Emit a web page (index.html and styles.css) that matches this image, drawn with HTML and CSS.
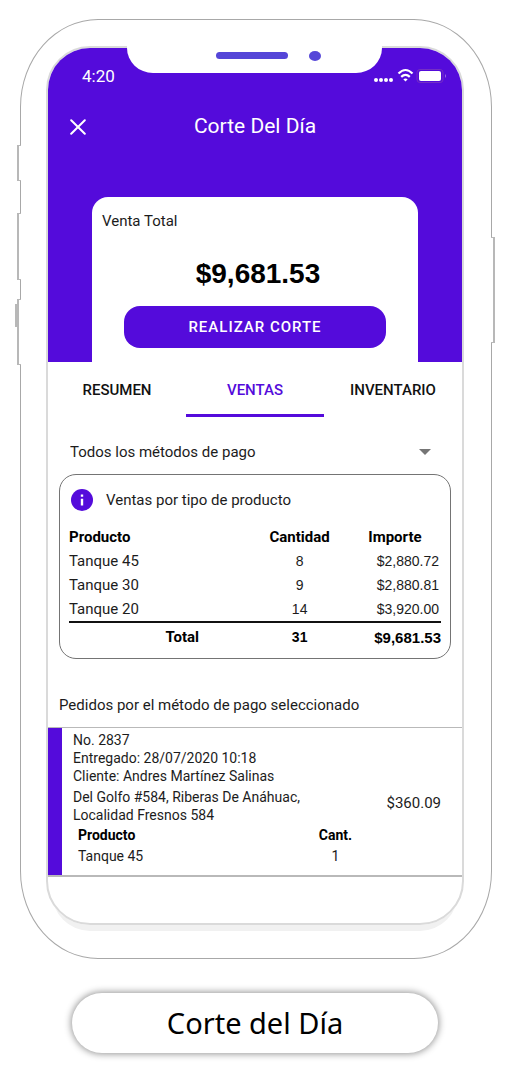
FILE: index.html
```html
<!DOCTYPE html>
<html lang="es">
<head>
<meta charset="utf-8">
<meta name="viewport" content="width=device-width, initial-scale=1">
<title>Corte del Día</title>
<link rel="stylesheet" href="styles.css">
</head>
<body>
<figure class="showcase">
  <div class="phone">
    <span class="side side-mute"></span>
    <span class="side side-up"></span>
    <span class="side side-down"></span>
    <span class="side side-nub"></span>
    <span class="side side-power"></span>
    <div class="notch"><span class="speaker"></span><span class="camera"></span></div>
    <main class="screen">
      <header class="hero">
        <div class="status">
          <span class="clock">4:20</span>
          <svg class="status-icons" viewBox="0 0 74 16" aria-hidden="true">
            <g fill="#fff">
              <circle cx="4" cy="12" r="2"/><circle cx="9" cy="12" r="2"/><circle cx="14" cy="12" r="2"/><circle cx="19" cy="12" r="2"/>
              <path d="M33.500 13.500l-2.200-2.300q2.200-1.600 4.400 0z"/>
              <rect x="47" y="3" width="22" height="10" rx="2"/>
            </g>
            <g fill="none" stroke="#fff" stroke-width="2.200">
              <path d="M26.500 5.600q7-7.200 14 0"/><path d="M29.200 8.900q4.300-4.100 8.600 0"/>
            </g>
            <rect x="45" y="1.500" width="26" height="13" rx="3" fill="none" stroke="#742fc4"/>
            <path d="M73 6v4q2-2 0-4z" fill="#a06be0"/>
          </svg>
        </div>
        <div class="titlebar">
          <button class="close" aria-label="Cerrar"><svg viewBox="0 0 16 16" aria-hidden="true"><path d="M1.200 1.200l13.600 13.600M14.800 1.200L1.200 14.800" stroke="#fff" stroke-width="2" stroke-linecap="round"/></svg></button>
          <h1>Corte Del Día</h1>
        </div>
        <section class="total-card">
          <h2>Venta Total</h2>
          <p class="amount">$9,681.53</p>
          <button class="cta">REALIZAR CORTE</button>
        </section>
      </header>
      <nav class="tabs">
        <button>RESUMEN</button>
        <button class="active">VENTAS</button>
        <button>INVENTARIO</button>
      </nav>
      <div class="filter">
        <select aria-label="Método de pago"><option>Todos los métodos de pago</option></select>
        <svg viewBox="0 0 12 6" aria-hidden="true"><path d="M0 0h12L6 6z" fill="#757575"/></svg>
      </div>
      <section class="summary">
        <h2><svg viewBox="0 0 24 24" aria-hidden="true"><circle cx="12" cy="12" r="12" fill="#540bdb"/><path d="M10.700 10.500h2.600V18h-2.600zM10.700 6h2.600v2.500h-2.600z" fill="#fff"/></svg>Ventas por tipo de producto</h2>
        <table class="sales">
          <thead><tr><th>Producto</th><th>Cantidad</th><th>Importe</th></tr></thead>
          <tbody>
            <tr><td>Tanque 45</td><td>8</td><td>$2,880.72</td></tr>
            <tr><td>Tanque 30</td><td>9</td><td>$2,880.81</td></tr>
            <tr><td>Tanque 20</td><td>14</td><td>$3,920.00</td></tr>
          </tbody>
          <tfoot><tr><th>Total</th><td>31</td><td>$9,681.53</td></tr></tfoot>
        </table>
      </section>
      <h2 class="orders-title">Pedidos por el método de pago seleccionado</h2>
      <article class="order">
        <div class="order-info">
          <p>No. 2837<br>Entregado: 28/07/2020 10:18<br>Cliente: Andres Martínez Salinas</p>
          <p>Del Golfo #584, Riberas De Anáhuac,<br>Localidad Fresnos 584</p>
          <table class="items">
            <thead><tr><th>Producto</th><th>Cant.</th></tr></thead>
            <tbody><tr><td>Tanque 45</td><td>1</td></tr></tbody>
          </table>
        </div>
        <p class="order-price">$360.09</p>
      </article>
    </main>
  </div>
  <figcaption class="caption">Corte del Día</figcaption>
</figure>
</body>
</html>
```
FILE: styles.css
```css
* { box-sizing: border-box; }
body, h1, h2, p, figure { margin: 0; }
body { background: #fff; color: #1c1c1c; font-family: Roboto, "Liberation Sans", sans-serif; font-size: 15px; }
h1, h2 { font-weight: 400; font-size: 15px; }
button { border: 0; padding: 0; background: none; font: inherit; color: inherit; cursor: pointer; }
svg { display: block; }

.showcase { padding: 19px 18px 12px 20px; }

.phone {
  position: relative;
  border: 1px solid #a8a8a8;
  border-radius: 78px / 88px;
  padding: 26px 27px 33px 25px;
}

/* Hardware details drawn over the frame outline */
.side { position: absolute; left: -4px; width: 4px; border: solid #b8b8b8; border-width: 1px 0 1px 2px; background: #fff; }
.side-mute { top: 125px; height: 36px; }
.side-up { top: 193px; height: 67px; }
.side-down { top: 279px; height: 66px; }
.side-nub { top: 284px; left: -6px; width: 2px; height: 23px; border-width: 0 0 0 2px; }
.side-power { top: 217px; left: auto; right: -4px; height: 106px; border-width: 1px 2px 1px 0; }
.notch {
  position: absolute;
  top: 24px; left: 106px; right: 109px;
  height: 29px;
  display: flex; justify-content: flex-end; align-items: flex-start; gap: 21px;
  padding: 7px 61px 0;
  background: #fff;
  border-radius: 0 0 26px 26px / 0 0 25px 25px;
  z-index: 1;
}
.speaker { width: 72px; height: 7px; border-radius: 4px; background: #5546d8; margin-top: 1px; }
.camera { width: 12px; height: 10px; border-radius: 50%; background: #5546d8; }

.screen {
  border: 2px solid #dadada;
  border-radius: 44px;
  overflow: hidden;
  padding-bottom: 46px;
  box-shadow: 0 12px 0 -6px #f1f1f1;
}

.hero { background: #540bdb; color: #fff; padding: 0 44px; }
.status { display: flex; justify-content: space-between; align-items: center; padding-top: 18px; margin: 0 -28px 0 -10px; }
.clock { font-size: 17px; line-height: 20px; }
.status-icons { width: 74px; height: 16px; }
.titlebar { display: grid; grid-template-columns: 16px 1fr 16px; align-items: center; padding: 26px 0 56px; margin: 0 -22px; }
.close svg { width: 16px; height: 16px; }
.titlebar h1 { font-size: 21px; line-height: 29px; text-align: center; }
.total-card { background: #fff; color: #1c1c1c; border-radius: 16px 16px 0 0; padding: 14px 32px; }
.total-card h2 { line-height: 20px; margin-left: -22px; }
.amount { color: #000; font: bold 28px/32px "Liberation Sans", Arial, sans-serif; text-align: center; margin: 27px 0 16px; padding-left: 6px; }
.cta { display: block; width: 100%; height: 42px; border-radius: 16px; background: #540bdb; color: #fff; font-weight: 500; letter-spacing: 1px; }

.tabs { display: grid; grid-template-columns: repeat(3, 1fr); }
.tabs button { height: 55px; padding-top: 4px; font-weight: 500; color: #111; border-bottom: 3px solid transparent; }
.tabs .active { color: #540bdb; border-color: #540bdb; }

.filter { display: flex; align-items: center; margin: 23px 31px 10px 22px; }
.filter select { appearance: none; flex: 1; border: 0; padding: 0; background: none; font: inherit; line-height: 24px; color: inherit; }
.filter svg { width: 12px; height: 6px; }

.summary { margin: 0 11px; padding: 13px 9px 6px; border: 1px solid #747474; border-radius: 17px; }
.summary h2 { display: flex; align-items: center; gap: 13px; padding-left: 2px; line-height: 24px; }
.summary h2 svg { width: 22px; height: 24px; }
.sales { width: 100%; margin-top: 13px; border-collapse: collapse; table-layout: fixed; line-height: 24px; }
.sales th, .sales td { padding: 0; text-align: center; }
.sales td { font-size: 14px; font-family: "Liberation Sans", Arial, sans-serif; }
.sales th:first-child, .sales td:first-child { font-family: inherit; font-size: 15px; text-align: left; }
.sales th:first-child { width: 50%; }
.sales th:nth-child(2) { width: 24%; }
.sales thead th { color: #000; font-weight: 700; }
.sales th:nth-child(3) { text-align: left; padding-left: 24px; }
.sales td:nth-child(3) { text-align: right; padding-right: 2px; }
.sales tfoot { border-top: 2px solid #111; line-height: 29px; color: #000; }
.sales tfoot th:first-child { text-align: right; padding-right: 56px; }
.sales tfoot td { font-weight: 700; }
.sales tfoot td:nth-child(3) { font-size: 15px; padding: 0; }

.orders-title { margin: 34px 11px 10px; line-height: 24px; }
.order { display: flex; align-items: center; gap: 8px; padding: 3px 21px 8px 25px; border: solid #b9b9b9; border-width: 1px 0 2px; box-shadow: inset 14px 0 #540bdb; font-size: 14px; line-height: 18px; }
.order-info { flex: 1; }
.order-info p + p { margin-top: 3px; }
.order-price { font-size: 15px; padding-top: 8px; }
.items { width: 100%; border-collapse: collapse; line-height: 21px; margin-top: 1px; }
.items th, .items td { padding: 0; text-align: left; }
.items th:first-child, .items td:first-child { padding-left: 5px; }
.items th { color: #000; }
.items th:last-child, .items td:last-child { width: 86px; text-align: center; }

.caption { margin: 34px 54px 0 52px; border-radius: 30px; background: #fff; box-shadow: 0 0 7px 1px #959595; color: #000; font: 29px/60px "Noto Sans", "Open Sans", sans-serif; text-align: center; }
```
